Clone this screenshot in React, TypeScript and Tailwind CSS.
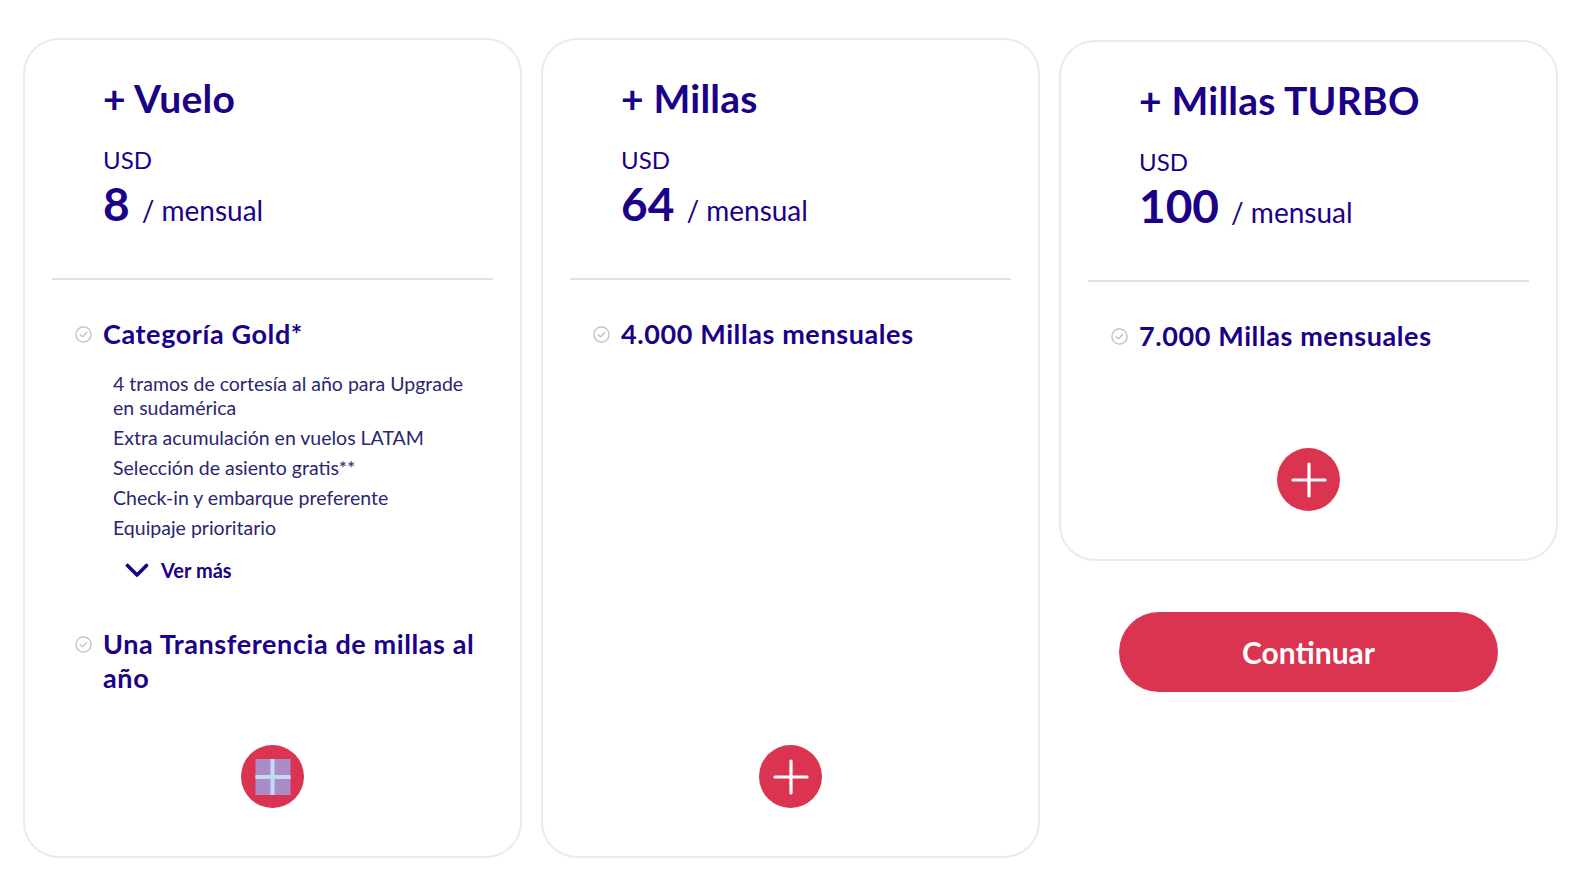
import React from "react";

type Plan = {
  title: string;
  price: string;
  features: { label: string; items?: string[]; more?: boolean }[];
};

const PLANS: Plan[] = [
  {
    title: "+ Vuelo",
    price: "8",
    features: [
      {
        label: "Categoría Gold*",
        items: [
          "4 tramos de cortesía al año para Upgrade en sudamérica",
          "Extra acumulación en vuelos LATAM",
          "Selección de asiento gratis**",
          "Check-in y embarque preferente",
          "Equipaje prioritario",
        ],
        more: true,
      },
      { label: "Una Transferencia de millas al año" },
    ],
  },
  {
    title: "+ Millas",
    price: "64",
    features: [{ label: "4.000 Millas mensuales" }],
  },
  {
    title: "+ Millas TURBO",
    price: "100",
    features: [{ label: "7.000 Millas mensuales" }],
  },
];

const CheckIcon = () => (
  <svg width="17" height="17" viewBox="0 0 17 17" fill="none" className="shrink-0">
    <circle cx="8.5" cy="8.5" r="7.6" stroke="#bdbdbd" strokeWidth="1.3" />
    <path d="M5.3 8.8l2.2 2.1 4.2-4.4" stroke="#bdbdbd" strokeWidth="1.3" strokeLinecap="round" strokeLinejoin="round" />
  </svg>
);

const Chevron = () => (
  <svg width="24" height="15" viewBox="0 0 24 15" fill="none">
    <path d="M2.5 2.5l9.5 9.5 9.5-9.5" stroke="#1b0088" strokeWidth="3.6" strokeLinecap="round" strokeLinejoin="round" />
  </svg>
);

const PlusButton = ({ highlighted = false }: { highlighted?: boolean }) => (
  <button className="relative flex h-[63px] w-[63px] items-center justify-center rounded-full bg-[#da3451]">
    <svg width="36" height="36" viewBox="0 0 36 36" fill="none">
      <path d="M18 2v32M2 18h32" stroke="#ffffff" strokeWidth="3.2" strokeLinecap="round" />
    </svg>
    {highlighted && (
      <span className="absolute left-1/2 top-1/2 flex h-[36px] w-[35px] -translate-x-1/2 -translate-y-1/2 items-center justify-center bg-[#aa8cc6]">
        <span className="absolute h-full w-[4px] bg-[#c3dbf3]" />
        <span className="absolute h-[4px] w-full bg-[#c3dbf3]" />
      </span>
    )}
  </button>
);

const PlanCard = ({
  plan,
  highlighted = false,
  buttonGap = "pt-[50px]",
}: {
  plan: Plan;
  highlighted?: boolean;
  buttonGap?: string;
}) => (
  <div className="flex flex-col rounded-[36px] border-2 border-[#ebebeb] bg-white text-[#1b0088]">
    {/* Header */}
    <div className="pl-[78px] pt-[35px] pb-[42px]">
      <h2 className="text-[39px] font-bold leading-[46px] tracking-[0.2px]">{plan.title}</h2>
      <p className="mt-[24px] text-[24px] leading-[30px]">USD</p>
      <p className="mt-[3px] flex items-baseline leading-[52px]">
        <span className="text-[46px] font-bold">{plan.price}</span>
        <span className="ml-3 text-[28px]">/ mensual</span>
      </p>
    </div>

    <div className="mx-[27px] h-[2px] bg-[#e2e2e2]" />

    {/* Features */}
    <div className="flex flex-col gap-[45px] pl-[50px] pr-[29px] pt-[37px]">
      {plan.features.map((f) => (
        <div key={f.label}>
          <div className="flex items-start gap-[11px]">
            <div className="mt-[9px]">
              <CheckIcon />
            </div>
            <p className="text-[27px] font-bold leading-[34px] tracking-[0.6px]">{f.label}</p>
          </div>
          {f.items && (
            <ul className="mt-[21px] flex w-[410px] flex-col gap-[6px] pl-[38px] text-[19.5px] leading-[24px] text-[#2a2672]">
              {f.items.map((it) => (
                <li key={it}>{it}</li>
              ))}
            </ul>
          )}
          {f.more && (
            <button className="mt-[18px] ml-[50px] flex items-center gap-[12px] text-[20px] font-bold leading-[24px] text-[#1b0088]">
              <Chevron />
              Ver más
            </button>
          )}
        </div>
      ))}
    </div>

    <div className={`mt-auto flex justify-center pb-[48px] ${buttonGap}`}>
      <PlusButton highlighted={highlighted} />
    </div>
  </div>
);

export default function App() {
  return (
    <div
      className="min-h-screen bg-white"
      style={{ fontFamily: "Lato, 'Noto Sans', sans-serif" }}
    >
      <div className="grid grid-cols-3 items-stretch gap-[19px] pl-[23px] pr-[36px] pt-[38px]">
        <PlanCard plan={PLANS[0]} highlighted />
        <PlanCard plan={PLANS[1]} />
        <div className="flex flex-col items-center">
          <div className="mt-[2px] w-full">
            <PlanCard plan={PLANS[2]} buttonGap="pt-[95px]" />
          </div>
          <button className="mt-[51px] h-[80px] w-[379px] rounded-full bg-[#da3451] text-[30px] font-bold text-white">
            Continuar
          </button>
        </div>
      </div>
    </div>
  );
}
